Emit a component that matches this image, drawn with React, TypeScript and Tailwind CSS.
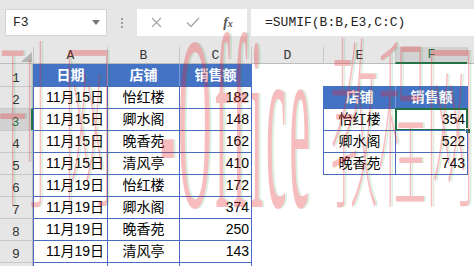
import React from "react"

const cjk = { fontFamily: '"Liberation Sans", "Noto Sans CJK SC", sans-serif' }
const mono = { fontFamily: '"Liberation Mono", "Noto Sans CJK SC", monospace' }

const sales = [
  ["11月15日", "怡红楼", "182"],
  ["11月15日", "卿水阁", "148"],
  ["11月15日", "晚香苑", "162"],
  ["11月15日", "清风亭", "410"],
  ["11月19日", "怡红楼", "172"],
  ["11月19日", "卿水阁", "374"],
  ["11月19日", "晚香苑", "250"],
  ["11月19日", "清风亭", "143"],
]

const summary = [
  ["怡红楼", "354"],
  ["卿水阁", "522"],
  ["晚香苑", "743"],
]

const RowHead = ({ n, active, first }: any) => {
  if (active) {
    return (
      <div
        className="w-[33px] shrink-0 flex items-end justify-center pb-[1px] text-[13px] leading-none bg-[#d2d2d2] text-[#217346] border-r-2 border-r-[#217346] border-t border-t-[#c8c8c8]"
        style={mono}
      >
        {n}
      </div>
    )
  }
  return (
    <div
      className={
        first
          ? "w-[33px] shrink-0 flex items-end justify-center pb-[1px] text-[13px] leading-none bg-[#e6e6e6] text-[#333] border-r border-r-[#bcbcbc]"
          : "w-[33px] shrink-0 flex items-end justify-center pb-[1px] text-[13px] leading-none bg-[#e6e6e6] text-[#333] border-r border-r-[#bcbcbc] border-t border-t-[#c8c8c8]"
      }
      style={mono}
    >
      {n}
    </div>
  )
}

const ColHead = ({ label, w, active }: any) => (
  <div
    className={
      active
        ? w + " shrink-0 flex items-end justify-center pb-[1px] leading-none bg-[#d2d2d2] text-[#217346] border-l border-l-[#c8c8c8] border-b-2 border-b-[#217346]"
        : w + " shrink-0 flex items-end justify-center pb-[1px] leading-none text-[#333] border-l border-l-[#c8c8c8] border-b border-b-[#bcbcbc]"
    }
  >
    {label}
  </div>
)

// faint stretched watermark lying over the sheet
const Watermark = () => (
  <div className="pointer-events-none absolute inset-0 overflow-hidden opacity-30">
    <div
      className="absolute left-[-2px] top-[18px] flex origin-top scale-y-[3.9] text-[48px] font-thin leading-none text-[#e8262a] [text-shadow:2px_0_0_rgba(30,160,70,0.5)]"
      style={{ fontFamily: '"Noto Sans CJK SC", sans-serif' }}
    >
      <span>刊</span>
      <span className="ml-[18px]">网</span>
    </div>
    <div
      className="absolute left-[160px] top-[2px] flex origin-top scale-y-[5.4] text-[46px] leading-none tracking-[3px] text-[#e8262a] [text-shadow:2px_0_0_rgba(30,160,70,0.5)]"
      style={{ fontFamily: '"Liberation Serif", serif' }}
    >
      -Office
    </div>
    <div
      className="absolute left-[330px] top-[18px] flex origin-top scale-y-[3.9] text-[48px] font-thin leading-none text-[#e8262a] [text-shadow:2px_0_0_rgba(30,160,70,0.5)]"
      style={{ fontFamily: '"Noto Sans CJK SC", sans-serif' }}
    >
      教程网
    </div>
  </div>
)

export default function App() {
  return (
    <div className="relative w-[474px] h-[266px] overflow-hidden bg-white text-[14px] text-black" style={cjk}>
      {/* formula toolbar */}
      <div className="h-[47px] bg-[#e6e6e6] flex items-start pt-[9px]">
        <div className="ml-[5px] w-[102px] h-[27px] bg-white border border-[#d4d4d4] flex items-center justify-between pl-[7px] pr-[6px]">
          <span className="text-[13px] text-[#222]" style={mono}>
            F3
          </span>
          <svg width="8" height="5" viewBox="0 0 8 5">
            <path d="M0 0h8L4 5z" fill="#777" />
          </svg>
        </div>
        <div className="w-[30px] h-[27px] flex flex-col items-center justify-center gap-[2px]">
          <span className="w-[2px] h-[2px] bg-[#9a9a9a]" />
          <span className="w-[2px] h-[2px] bg-[#9a9a9a]" />
          <span className="w-[2px] h-[2px] bg-[#9a9a9a]" />
        </div>
        <div className="w-[110px] h-[27px] bg-white flex items-center">
          <div className="w-[38px] flex justify-center">
            <svg width="11" height="11" viewBox="0 0 11 11">
              <path d="M1 1l9 9M10 1l-9 9" stroke="#a8a8a8" strokeWidth="1.3" fill="none" />
            </svg>
          </div>
          <div className="w-[36px] flex justify-center">
            <svg width="14" height="11" viewBox="0 0 14 11">
              <path d="M1 5.5l4 4L13 1" stroke="#a8a8a8" strokeWidth="1.4" fill="none" />
            </svg>
          </div>
          <div className="w-[34px] flex justify-center">
            <span className="italic font-bold text-[14px] text-[#555]" style={{ fontFamily: '"Liberation Serif", serif' }}>
              f<span className="text-[10px]">x</span>
            </span>
          </div>
        </div>
        <div className="ml-[4px] flex-1 h-[27px] bg-white flex items-center pl-[14px]">
          <span className="text-[13px] text-[#222]" style={mono}>
            =SUMIF(B:B,E3,C:C)
          </span>
        </div>
      </div>

      {/* column headers */}
      <div className="flex h-[17px] bg-[#e6e6e6] text-[13px]" style={mono}>
        <div className="w-[33px] shrink-0 flex items-end justify-end pr-[1px] pb-[1px] border-b border-b-[#bcbcbc]">
          <svg width="11" height="10" viewBox="0 0 11 10">
            <path d="M11 0v10H0z" fill="#b5b5b5" />
          </svg>
        </div>
        <ColHead label="A" w="w-[74px]" />
        <ColHead label="B" w="w-[72px]" />
        <ColHead label="C" w="w-[72px]" />
        <ColHead label="D" w="w-[72px]" />
        <ColHead label="E" w="w-[72px]" />
        <ColHead label="F" w="w-[72px]" active />
        <div className="flex-1 border-l border-l-[#c8c8c8] border-b border-b-[#bcbcbc]" />
      </div>

      {/* row 1 */}
      <div className="flex h-[22px]">
        <RowHead n={1} first />
        <div className="w-[74px] shrink-0 flex items-center justify-center bg-[#4472c4] text-white font-bold border-l border-l-[#4472c4]">
          日期
        </div>
        <div className="w-[72px] shrink-0 flex items-center justify-center bg-[#4472c4] text-white font-bold border-l border-l-[#7f9ad6]">
          店铺
        </div>
        <div className="w-[73px] shrink-0 flex items-center justify-center bg-[#4472c4] text-white font-bold border-l border-l-[#7f9ad6] border-r border-r-[#4472c4]">
          销售额
        </div>
        <div className="flex-1" />
      </div>

      {/* rows 2-9 */}
      {sales.map((r, i) => {
        const n = i + 2
        const s = n >= 3 && n <= 5 ? summary[n - 3] : null
        return (
          <div key={n} className="flex h-[22px]">
            <RowHead n={n} active={n === 3} />
            <div className="w-[74px] shrink-0 flex items-center justify-end pr-[3px] border-l border-t border-[#4a6cc0]">
              {r[0]}
            </div>
            <div className="w-[72px] shrink-0 flex items-center justify-center border-l border-t border-[#4a6cc0]">
              {r[1]}
            </div>
            <div className="w-[73px] shrink-0 flex items-center justify-end pr-[2px] border-l border-t border-r border-[#4a6cc0]">
              {r[2]}
            </div>
            <div className="w-[71px] shrink-0" />
            {n === 2 && (
              <>
                <div className="w-[72px] shrink-0 flex items-center justify-center bg-[#4472c4] text-white font-bold border-l border-l-[#4472c4]">
                  店铺
                </div>
                <div className="w-[73px] shrink-0 flex items-center justify-center bg-[#4472c4] text-white font-bold border-l border-l-[#7f9ad6] border-r border-r-[#4472c4]">
                  销售额
                </div>
              </>
            )}
            {s && (
              <>
                <div className="w-[72px] shrink-0 flex items-center justify-center border-l border-t border-[#4a6cc0]">
                  {s[0]}
                </div>
                <div className="relative w-[73px] shrink-0 flex items-center justify-end pr-[2px] border-l border-t border-r border-[#4a6cc0]">
                  {s[1]}
                  {n === 3 && (
                    <>
                      <div className="absolute -left-[1px] -top-[1px] -right-[1px] -bottom-[1px] border-2 border-[#217346]" />
                      <div className="absolute -right-[4px] -bottom-[4px] w-[6px] h-[6px] bg-[#217346] border border-white" />
                    </>
                  )}
                </div>
              </>
            )}
            {n === 6 && (
              <>
                <div className="w-[72px] shrink-0 border-t border-[#4a6cc0]" />
                <div className="w-[73px] shrink-0 border-t border-[#4a6cc0]" />
              </>
            )}
            <div className="flex-1" />
          </div>
        )
      })}

      {/* row 10 (cut off) */}
      <div className="flex h-[22px]">
        <RowHead n={10} />
        <div className="w-[74px] shrink-0 border-l border-t border-[#4a6cc0]" />
        <div className="w-[72px] shrink-0 border-l border-t border-[#4a6cc0]" />
        <div className="w-[73px] shrink-0 border-l border-t border-r border-[#4a6cc0]" />
        <div className="flex-1" />
      </div>

      <Watermark />
    </div>
  )
}
